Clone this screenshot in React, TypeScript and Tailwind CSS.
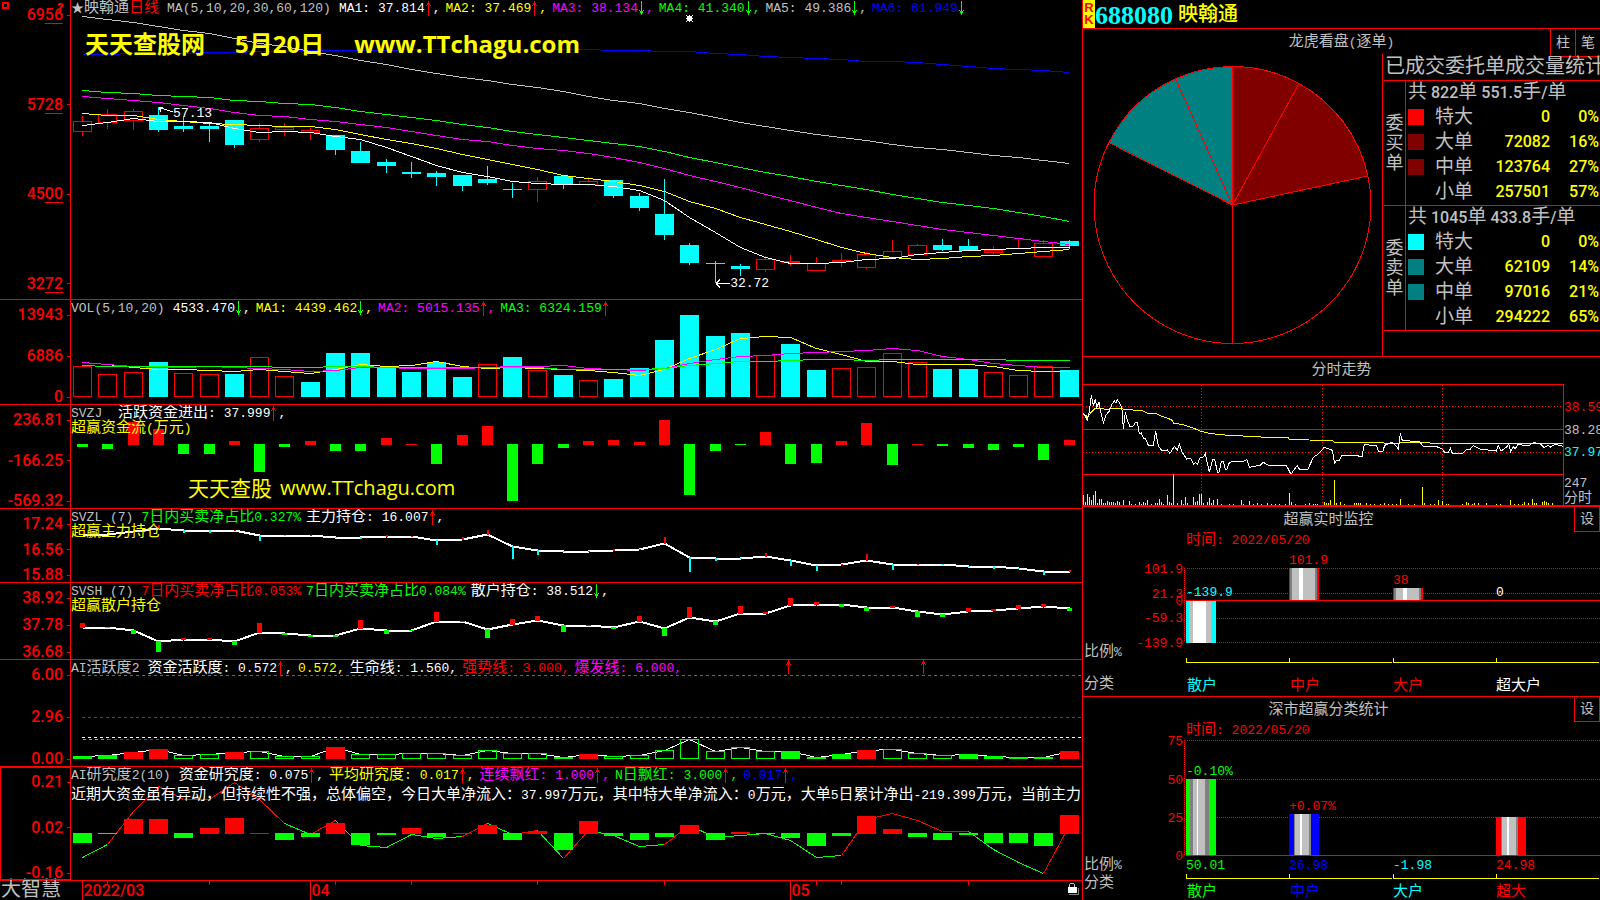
import { Fragment, ReactNode } from 'react';
import clsx from 'clsx';

const RED = '#ff0000';
const CYAN = '#00ffff';
const GREEN = '#00ff00';
const YELLOW = '#ffff00';
const MAGENTA = '#ff00ff';
const GRAY = '#c0c0c0';
const DARK = '#808080';
const BLUE = '#0000ff';
const WHITE = '#ffffff';

const CHART_WIDTH = 1011;

/** Horizontal centre of the n-th trading day. */
const dayX = (i: number) => Math.round(11 + 25.3 * i) + 0.5;

const splitCjk = (text: string) => text.split(/([\u2e80-\u9fff\uff00-\uffef]+)/).filter(Boolean);
const isCjk = (text: string) => /[\u2e80-\u9fff\uff00-\uffef]/.test(text);

function Mixed({ children }: { children: string }) {
  return (
    <>
      {splitCjk(children).map((part, i) =>
        isCjk(part) ? (
          <span key={i} className="text-[15px] leading-[15px]">
            {part}
          </span>
        ) : (
          <Fragment key={i}>{part}</Fragment>
        ),
      )}
    </>
  );
}

interface Reading {
  text: string;
  color: string;
  arrow?: 'up' | 'down';
  comma?: boolean;
}

function Arrow({ dir }: { dir: 'up' | 'down' }) {
  return (
    <svg width="8" height="15" viewBox="0 0 8 15" shapeRendering="crispEdges" className="shrink-0">
      {dir === 'up' ? (
        <path d="M3 0h1v15h-1zM2 2h3v2h-3zM1 4h1v1h-1zM5 4h1v1h-1z" fill={RED} />
      ) : (
        <path d="M3 0h1v14h-1zM2 10h3v2h-3zM1 9h1v1h-1zM5 9h1v1h-1z" fill={GREEN} />
      )}
    </svg>
  );
}

function Readings({ title, items }: { title: ReactNode; items: Reading[] }) {
  return (
    <div className="relative mt-px flex h-[15px] items-center gap-[5px] whitespace-pre">
      <h2 className="mr-[3px] text-[#c0c0c0]">{title}</h2>
      {items.map((item, i) => (
        <span key={i} className={clsx('flex items-center', item.color)}>
          <span>
            <Mixed>{item.text}</Mixed>
          </span>
          {item.arrow && <Arrow dir={item.arrow} />}
          {item.comma !== false && <span>,</span>}
        </span>
      ))}
    </div>
  );
}

interface PanelProps {
  labels: ReactNode[];
  height: number;
  drawing: ReactNode;
  boxed?: boolean;
  padded?: boolean;
  children: ReactNode;
}

function Panel({ labels, height, drawing, boxed, padded, children }: PanelProps) {
  return (
    <section className="flex min-h-0 border-b border-[#ff0000]">
      <div
        className={clsx(
          'relative flex w-[71px] shrink-0 flex-col justify-between border-r border-[#ff0000] pt-2',
          'font-[Roboto,sans-serif] text-base leading-[14px] font-medium text-[#ff0000]',
          boxed && 'outline outline-[#ff0000] -outline-offset-1',
          padded && 'pb-2',
        )}
      >
        {labels.map((label, i) => (
          <div key={i} className="flex h-[14px] items-center justify-end gap-1">
            <span>{label}</span>
            <span className="h-px w-[3px] bg-[#ff0000]" />
          </div>
        ))}
      </div>
      <div className="relative min-w-0 flex-1 overflow-hidden">
        <svg
          className="absolute inset-0 h-full w-full"
          viewBox={`0 0 ${CHART_WIDTH} ${height}`}
          preserveAspectRatio="none"
          shapeRendering="crispEdges"
        >
          {drawing}
        </svg>
        {children}
      </div>
    </section>
  );
}

function DayLine({ ys, color, width = 1 }: { ys: number[]; color: string; width?: number }) {
  const points = ys.map((y, i) => `${dayX(i)},${y + 0.5}`).join(' ');
  return <polyline points={points} fill="none" stroke={color} strokeWidth={width} />;
}

/** Bars growing up (positive) or down (negative) from a base line. */
function SignedBars({
  values,
  base,
  width,
  down = GREEN,
}: {
  values: number[];
  base: number | number[];
  width: number;
  down?: string;
}) {
  return (
    <>
      {values.map((v, i) => {
        const y = typeof base === 'number' ? base : base[i];
        if (v === 0) return null;
        return (
          <rect
            key={i}
            x={Math.floor(dayX(i) - width / 2 + 0.5)}
            y={v > 0 ? y + 1 - v : y}
            width={width}
            height={Math.abs(v)}
            fill={v > 0 ? RED : down}
          />
        );
      })}
    </>
  );
}

// ---- daily candles: high, body top, body bottom, low ----
const candles: [number, number, number, number][] = [
  [116, 121, 131, 136], [109, 114, 122, 129], [109, 111, 120, 130], [107, 115, 130, 132],
  [116, 126, 129, 132], [124, 126, 129, 142], [120, 120, 145, 148], [123, 128, 139, 142],
  [123, 127, 129, 136], [128, 130, 132, 140], [135, 135, 150, 155], [142, 151, 163, 163],
  [159, 162, 166, 173], [162, 172, 174, 178], [171, 173, 177, 186], [175, 175, 186, 191],
  [166, 179, 183, 185], [183, 189, 190, 198], [177, 181, 189, 202], [176, 176, 184, 189],
  [177, 181, 184, 186], [180, 180, 196, 198], [193, 196, 208, 211], [179, 214, 235, 240],
  [243, 245, 263, 265], [261, 263, 264, 283], [264, 266, 269, 276], [256, 259, 269, 272],
  [255, 261, 262, 266], [257, 263, 270, 270], [253, 260, 261, 267], [252, 254, 267, 269],
  [240, 251, 257, 257], [244, 245, 254, 254], [239, 245, 250, 251], [239, 246, 251, 251],
  [246, 250, 252, 254], [240, 246, 246, 248], [240, 243, 256, 256], [240, 241, 246, 249],
];
const risingDays = new Set([0, 1, 2, 7, 8, 9, 18, 20, 27, 28, 29, 30, 31, 32, 33, 36, 37, 38]);

const ma5 = [125, 122, 118, 121, 121, 122, 128, 132, 131, 132, 136, 139, 147, 156, 165, 172, 176, 181, 183, 184, 184, 186, 190, 200, 217, 232, 247, 257, 263, 263, 262, 259, 258, 254, 252, 250, 249, 248, 247, 247];
const ma10 = [113, 115, 115, 119, 121, 123, 124, 125, 126, 126, 129, 134, 139, 143, 148, 154, 159, 164, 169, 175, 178, 181, 185, 191, 201, 208, 217, 224, 231, 239, 247, 253, 257, 259, 258, 256, 255, 253, 251, 249];
const ma20 = [96, 98, 100, 102, 105, 108, 112, 115, 116, 119, 121, 124, 127, 131, 135, 139, 141, 145, 148, 150, 153, 157, 162, 168, 175, 181, 187, 194, 200, 207, 213, 217, 221, 225, 229, 232, 235, 238, 241, 244];
const ma30 = [90, 92, 93, 95, 96, 97, 100, 101, 103, 104, 107, 111, 114, 117, 120, 124, 127, 131, 134, 137, 140, 143, 146, 151, 157, 162, 167, 172, 176, 181, 185, 189, 194, 198, 202, 205, 208, 212, 216, 221];
const ma60 = [16, 19, 22, 26, 30, 33, 38, 43, 46, 51, 55, 60, 64, 69, 73, 77, 80, 84, 87, 91, 96, 100, 103, 108, 112, 117, 122, 126, 130, 134, 137, 140, 144, 147, 149, 152, 155, 157, 160, 163];
const ma120 = [54, 54, 53, 53, 53, 52, 52, 51, 51, 50, 50, 50, 50, 49, 49, 49, 49, 49, 49, 49, 49, 50, 50, 51, 51, 53, 54, 56, 57, 58, 59, 61, 61, 62, 64, 66, 68, 69, 70, 72];

// ---- volume ----
const volumeTops = [66, 74, 72, 62, 73, 74, 74, 57, 76, 82, 53, 53, 68, 72, 62, 77, 64, 57, 70, 75, 80, 79, 68, 40, 15, 36, 33, 55, 44, 70, 68, 67, 53, 62, 69, 69, 72, 75, 66, 70];
const risingVolume = new Set([0, 1, 2, 4, 5, 7, 8, 16, 18, 20, 27, 30, 31, 32, 33, 36, 37, 38]);
const volMa1 = [62, 64, 67, 69, 69, 70, 71, 69, 71, 73, 69, 64, 66, 65, 61, 66, 68, 67, 68, 69, 70, 72, 75, 69, 58, 49, 38, 36, 37, 48, 54, 61, 61, 64, 64, 64, 66, 70, 71, 71];
const volMa2 = [62, 64, 66, 67, 67, 66, 67, 68, 69, 71, 70, 67, 67, 68, 68, 68, 67, 66, 66, 65, 68, 69, 70, 68, 63, 59, 56, 55, 53, 52, 51, 50, 48, 50, 56, 59, 63, 65, 67, 67];
const volMa3 = [65, 66, 66, 66, 66, 66, 66, 66, 67, 67, 66, 66, 67, 67, 67, 67, 67, 67, 67, 69, 69, 69, 69, 68, 65, 63, 61, 61, 60, 59, 59, 60, 59, 59, 59, 59, 59, 60, 60, 60];

const fundFlow = [-3, -5, 23, 16, -10, -10, 4, -28, -3, 4, -7, -7, 7, 1, -20, 10, 19, -57, -20, -4, 4, 5, 3, 25, -51, -7, -1, 13, -20, -19, 4, 22, -21, 1, -2, -4, -6, -3, -16, 5];

const mainHold = [25, 25, 22, 19, 21, 21, 21, 26, 26, 26, 28, 28, 27, 27, 31, 30, 25, 37, 41, 42, 42, 41, 40, 34, 48, 49, 49, 47, 51, 56, 55, 51, 55, 55, 55, 57, 57, 59, 62, 62];
const mainDelta = [0, 0, 3, 4, -3, -3, 1, -6, -1, 1, -1, -2, 2, 1, -5, 3, 5, -13, -5, -1, 1, 2, 1, 7, -15, -3, -1, 4, -6, -6, 1, 7, -6, 1, -1, -1, -3, -1, -4, 2];

const retailHold = [44, 44, 47, 58, 56, 56, 58, 49, 50, 52, 52, 45, 47, 47, 38, 38, 46, 41, 37, 42, 42, 44, 38, 45, 34, 38, 30, 30, 22, 21, 21, 24, 24, 28, 31, 28, 27, 25, 23, 25];
const retailDelta = [5, -1, -4, -11, 2, 2, -4, 10, -2, -2, -2, 9, -4, -1, 10, 1, -9, 6, 5, -7, 1, -2, 6, -8, 11, -4, 8, 2, 8, 3, -3, -4, 2, -6, -3, 4, 2, 4, 3, -3];

const activityTops = [96, 95, 92, 89, 95, 94, 92, 91, 96, 96, 87, 94, 94, 93, 93, 95, 90, 93, 93, 97, 94, 96, 95, 90, 79, 91, 87, 91, 91, 97, 94, 90, 89, 93, 95, 94, 96, 97, 97, 91];
const activityRed = new Set([2, 3, 6, 10, 20, 31, 39]);
const activityGreen = new Set([0, 1, 19, 28, 29, 30, 35, 36, 37, 38]);
const thresholds: [number, number, string][] = [
  [0, 1, GREEN], [1, 18, RED], [18, 19, GREEN], [19, 27, RED],
  [27, 30, GREEN], [30, 34, RED], [34, 38, GREEN], [38, 39, RED],
];

const researchBars = [-10, -1, 15, 15, -5, 6, 16, 1, -7, -4, 11, -12, -2, 6, -4, 1, 9, -7, 3, -17, 13, -3, -7, -4, 9, -7, 2, -1, -5, -13, -3, 18, 5, -4, -7, -2, -10, -10, -13, 19];
const researchLine = [90, 77, 44, 19, 32, 32, 15, 32, 56, 67, 53, 78, 80, 67, 71, 69, 56, 67, 63, 91, 63, 68, 79, 77, 58, 70, 68, 66, 73, 90, 88, 52, 46, 53, 64, 64, 82, 95, 106, 58];
const researchTrend = 'grrrrrrrgrgggggrgrgrgggrggggggrrrrrgggr';

function PriceDrawing() {
  return (
    <>
      {candles.map(([high, top, bottom, low], i) => {
        const x = dayX(i);
        if (!risingDays.has(i)) {
          return (
            <g key={i} fill={CYAN}>
              <rect x={x - 0.5} y={high} width={1} height={low - high} />
              <rect x={x - 9.5} y={top} width={19} height={bottom - top} />
            </g>
          );
        }
        return (
          <g key={i} fill="none" stroke={RED}>
            <path d={`M${x} ${high}V${top}M${x} ${bottom}V${low}`} />
            <rect x={x - 9} y={top + 0.5} width={18} height={bottom - top} />
          </g>
        );
      })}
      <DayLine ys={ma120} color={BLUE} />
      <DayLine ys={ma60} color={GRAY} />
      <DayLine ys={ma30} color={GREEN} />
      <DayLine ys={ma20} color={MAGENTA} />
      <DayLine ys={ma10} color={YELLOW} />
      <DayLine ys={ma5} color={WHITE} />
      <path d="M88 107.5L102 112M88 107.5h4M88 107.5l2 4" stroke={WHITE} fill="none" />
      <path d="M645 283.5h14M645 283.5l4 -4M645 283.5l4 4" stroke={WHITE} fill="none" />
      <path
        d="M616 16h5v5h-5zM615 15h1v1h-1zM618 15h1v1h-1zM621 15h1v1h-1zM615 18h7v1h-7zM615 21h1v1h-1zM618 21h1v1h-1zM621 21h1v1h-1z"
        fill={WHITE}
      />
    </>
  );
}

function VolumeDrawing() {
  return (
    <>
      {volumeTops.map((top, i) =>
        risingVolume.has(i) ? (
          <rect key={i} x={dayX(i) - 9} y={top + 0.5} width={18} height={96 - top} fill="none" stroke={RED} />
        ) : (
          <rect key={i} x={dayX(i) - 9.5} y={top} width={19} height={97 - top} fill={CYAN} />
        ),
      )}
      <DayLine ys={volMa1} color={YELLOW} />
      <DayLine ys={volMa2} color={MAGENTA} />
      <DayLine ys={volMa3} color={GREEN} />
    </>
  );
}

function ActivityDrawing() {
  return (
    <>
      <path d="M11 15.5H1011" stroke={MAGENTA} strokeDasharray="3 3" />
      <path d="M11 57.5H1011" stroke={RED} strokeDasharray="3 3" />
      <path d="M11 77.5H1011" stroke={WHITE} strokeDasharray="3 3" />
      {thresholds.map(([from, to, color]) => (
        <path key={from} d={`M${dayX(from)} 79.5H${dayX(to)}`} stroke={color} strokeDasharray="3 3" />
      ))}
      <DayLine ys={activityTops} color={WHITE} />
      {activityTops.map((top, i) => {
        const red = activityRed.has(i);
        return red || activityGreen.has(i) ? (
          <rect key={i} x={dayX(i) - 9.5} y={top} width={19} height={99 - top} fill={red ? RED : GREEN} />
        ) : (
          <rect key={i} x={dayX(i) - 9} y={top + 0.5} width={18} height={98 - top} fill="none" stroke={GREEN} />
        );
      })}
      {[717, 852].map((x) => (
        <path key={x} d={`M${x} 0h1v14h-1zM${x - 1} 2h3v2h-3zM${x - 2} 4h1v1h-1zM${x + 2} 4h1v1h-1z`} fill={RED} />
      ))}
    </>
  );
}

function ResearchDrawing() {
  return (
    <>
      {researchLine.slice(1).map((y, i) => (
        <path
          key={i}
          d={`M${dayX(i)} ${researchLine[i] + 0.5}L${dayX(i + 1)} ${y + 0.5}`}
          stroke={researchTrend[i] === 'r' ? RED : GREEN}
        />
      ))}
      <SignedBars values={researchBars} base={66} width={19} />
    </>
  );
}

function PriceLabel({ value }: { value: string }) {
  return (
    <>
      {value.slice(0, 2)}
      <span className="underline decoration-1 underline-offset-[3px]">{value.slice(2)}</span>
    </>
  );
}

function Timeline() {
  const months: [number, string][] = [[0, '2022/03'], [9, '04'], [28, '05']];
  return (
    <footer className="flex min-h-0">
      <div className="w-[71px] shrink-0 pl-px text-xl leading-5 whitespace-nowrap text-[#c0c0c0]">大智慧</div>
      <div className="relative flex-1 overflow-hidden">
        <svg
          className="absolute inset-0 h-full w-full"
          viewBox={`0 0 ${CHART_WIDTH} 19`}
          preserveAspectRatio="none"
          shapeRendering="crispEdges"
        >
          {months.map(([day]) => (
            <path key={day} d={`M${dayX(day)} 0V19`} stroke={RED} />
          ))}
          {[1, 5, 10, 13, 18, 23, 29, 30, 35].map((day) => (
            <path key={day} d={`M${dayX(day)} 0V4`} stroke={RED} />
          ))}
          <path d="M999 2.5h4M998.5 3v3M1003.5 3v3" stroke={GRAY} fill="none" />
          <path d="M998 13.5h10M1007.5 7v7" stroke={DARK} fill="none" />
          <path d="M997 6h9v6h-9z" fill={WHITE} />
        </svg>
        {months.map(([day, label]) => (
          <span
            key={label}
            className="absolute top-0 pl-px font-[Roboto,sans-serif] text-base leading-[19px] font-medium text-[#ff0000]"
            style={{ left: `${(dayX(day) / CHART_WIDTH) * 100}%` }}
          >
            {label}
          </span>
        ))}
      </div>
    </footer>
  );
}

// ---- right column ----

const orderGroups = [
  {
    side: '委买单',
    count: '822',
    average: '551.5',
    rows: [
      { name: '特大', swatch: 'bg-[#ff0000]', amount: 0, share: '0%' },
      { name: '大单', swatch: 'bg-[#800000]', amount: 72082, share: '16%' },
      { name: '中单', swatch: 'bg-[#800000]', amount: 123764, share: '27%' },
      { name: '小单', swatch: 'bg-black', amount: 257501, share: '57%' },
    ],
  },
  {
    side: '委卖单',
    count: '1045',
    average: '433.8',
    rows: [
      { name: '特大', swatch: 'bg-[#00ffff]', amount: 0, share: '0%' },
      { name: '大单', swatch: 'bg-[#008080]', amount: 62109, share: '14%' },
      { name: '中单', swatch: 'bg-[#008080]', amount: 97016, share: '21%' },
      { name: '小单', swatch: 'bg-black', amount: 294222, share: '65%' },
    ],
  },
];

const slices: [number, number, string][] = [
  [0, 28.7, '#800000'],
  [28.7, 77.9, '#800000'],
  [77.9, 180, 'none'],
  [180, 296.8, 'none'],
  [296.8, 335.7, '#008080'],
  [335.7, 360, '#008080'],
];

function OrderPie() {
  const cx = 149.5;
  const cy = 151;
  const r = 138.5;
  const at = (deg: number) => {
    const a = (deg * Math.PI) / 180;
    return `${(cx + r * Math.sin(a)).toFixed(1)} ${(cy - r * Math.cos(a)).toFixed(1)}`;
  };
  return (
    <svg viewBox="0 0 299 302" className="h-full w-full" shapeRendering="crispEdges">
      {slices.map(([from, to, fill]) => (
        <path
          key={from}
          d={`M${cx} ${cy}L${at(from)}A${r} ${r} 0 0 1 ${at(to)}Z`}
          fill={fill}
          stroke={RED}
        />
      ))}
    </svg>
  );
}

function OrderTable({ group }: { group: (typeof orderGroups)[number] }) {
  return (
    <div className="flex h-[125px] border-t border-[#ff0000]">
      <div className="flex w-[21px] shrink-0 flex-col items-center justify-center pt-px text-lg leading-5 text-[#c0c0c0]">
        {[...group.side].map((ch) => (
          <span key={ch}>{ch}</span>
        ))}
      </div>
      <div className="min-w-0 flex-1 border-l border-[#ff0000]">
        <table className="w-full table-fixed font-[Roboto,'Noto_Sans_CJK_SC',sans-serif] text-base font-medium text-[#ffff00]">
          <caption className="h-[23px] pl-[2px] text-left leading-[22px] whitespace-nowrap text-[#c0c0c0]">
            <span className="text-[19px] leading-[22px] font-normal">共</span> {group.count}
            <span className="text-[19px] leading-[22px] font-normal">单</span> {group.average}
            <span className="text-[19px] leading-[22px] font-normal">手</span>/
            <span className="text-[19px] leading-[22px] font-normal">单</span>
          </caption>
          <tbody>
            {group.rows.map((row) => (
              <tr key={row.name} className="h-[25px] leading-6">
                <td className="w-[29px] p-0 pl-[2px]">
                  <div className={clsx('size-4', row.swatch)} />
                </td>
                <th className="w-11 p-0 text-left text-[19px] leading-6 font-normal text-[#c0c0c0]">{row.name}</th>
                <td className="w-[71px] p-0 text-right">{row.amount}</td>
                <td className="p-0 pr-px text-right">{row.share}</td>
              </tr>
            ))}
          </tbody>
        </table>
      </div>
    </div>
  );
}

const intradayPrice =
  '9,190 15,197 22,210 27,190 34,136 40,168 46,146 50,172 57,157 63,190 70,218 78,195 88,183 96,163 103,152 108,160 112,149 122,165 127,185 130,238 136,186 142,210 150,230 160,228 166,217 172,217 178,252 184,248 190,265 196,265 205,286 220,286 227,244 235,288 245,301 262,300 270,310 283,289 292,300 298,281 306,306 320,327 332,325 341,343 346,337 352,343 360,323 370,321 376,311 382,340 388,366 398,329 404,329 413,368 418,366 424,334 430,334 436,358 441,357 448,338 460,334 490,335 500,328 508,352 540,346 550,337 565,346 620,348 633,373 645,355 652,347 658,357 684,357 700,322 715,312 733,292 757,301 764,340 770,331 778,331 785,318 830,317 846,320 853,284 890,287 896,305 908,306 914,286 935,277 950,289 955,297 961,250 967,272 985,272 1000,276 1018,274 1030,289 1070,290 1088,298 1094,307 1106,306 1111,295 1117,310 1148,310 1160,298 1170,298 1180,287 1200,297 1249,303 1255,287 1264,303 1280,291 1286,282 1292,304 1300,290 1306,296 1314,283 1345,288 1360,278 1380,281 1392,293 1405,286 1412,291 1425,283 1450,289';
const intradayAverage =
  '9,190 22,200 45,175 85,178 95,175 130,177 190,183 203,190 228,190 245,199 262,204 275,210 281,220 310,224 340,234 360,243 385,249 412,253 448,256 507,259 562,262 624,263 628,268 687,270 757,271 763,277 910,277 914,280 955,280 962,277 1048,277 1052,280 1450,280';
const intradayVolume: [number, number][] = [
  [10, 435], [16, 456], [22, 432], [28, 441], [34, 450], [40, 435], [46, 423], [52, 460], [58, 447], [64, 447],
  [70, 459], [76, 460], [82, 453], [88, 456], [94, 456], [100, 456], [106, 459], [112, 453], [118, 456], [130, 450],
  [148, 453], [154, 462], [166, 462], [178, 456], [184, 461], [190, 456], [196, 459], [202, 450], [214, 462], [226, 459],
  [232, 459], [238, 447], [244, 456], [250, 462], [262, 435], [268, 456], [274, 459], [280, 373], [292, 459], [304, 450],
  [310, 462], [316, 441], [322, 459], [340, 441], [346, 456], [352, 453], [358, 432], [364, 432], [370, 459], [382, 456],
  [388, 444], [394, 459], [400, 450], [412, 447], [424, 462], [448, 462], [460, 462], [484, 450], [490, 462], [508, 453],
  [520, 462], [532, 459], [544, 462], [562, 459], [574, 462], [586, 462], [598, 462], [616, 462], [628, 429], [634, 456],
  [646, 462], [676, 462], [688, 459], [700, 462], [706, 462], [712, 462], [733, 456], [739, 459], [745, 459], [751, 450],
  [763, 390], [769, 459], [781, 456], [793, 462], [823, 460], [829, 459], [835, 459], [841, 459], [859, 459], [871, 462],
  [883, 462], [901, 462], [913, 459], [925, 462], [937, 462], [949, 462], [961, 447], [985, 462], [1003, 462], [1027, 411],
  [1033, 459], [1051, 462], [1063, 462], [1075, 450], [1087, 453], [1099, 462], [1105, 462], [1147, 462], [1159, 456],
  [1165, 459], [1177, 462], [1183, 459], [1195, 459], [1219, 459], [1249, 462], [1261, 462], [1291, 450], [1303, 462],
  [1315, 462], [1327, 462], [1333, 456], [1345, 459], [1357, 447], [1363, 459], [1369, 459], [1387, 456], [1393, 453],
  [1399, 456], [1405, 460], [1417, 460], [1450, 444],
];

function IntradayChart() {
  return (
    <svg
      viewBox="9 105 1440 360"
      preserveAspectRatio="none"
      className="min-h-0 min-w-0 flex-1 border-r border-[#ff0000]"
      shapeRendering="crispEdges"
      fill="none"
      strokeWidth="3"
    >
      <g stroke={RED}>
        <path d="M9 169.5H1450M9 307.5H1450M364.5 105V465M727.5 105V465M1087.5 105V465" strokeDasharray="3 6" />
        <path d="M9 238.5H1450M9 373.5H1450" />
      </g>
      <path d={intradayVolume.map(([x, top]) => `M${x + 0.5} 465V${top}`).join('')} stroke={YELLOW} />
      <polyline points={intradayAverage} stroke={YELLOW} />
      <polyline points={intradayPrice} stroke={WHITE} />
    </svg>
  );
}

interface LabelProps {
  x: number;
  y: number;
  color: string;
  end?: boolean;
  children: string;
}

function Label({ x, y, color, end, children }: LabelProps) {
  return (
    <text
      x={x}
      y={isCjk(children) ? y + 5 : y + 4}
      fill={color}
      fontSize={13}
      textAnchor={end ? 'end' : 'start'}
    >
      {splitCjk(children).map((part, i) => (
        <tspan key={i} fontSize={isCjk(part) ? 15 : 13}>
          {part}
        </tspan>
      ))}
    </text>
  );
}

/** A striped cylinder: every stop is [width, colour] from left to right. */
function Cylinder({ x, y, height, stops }: { x: number; y: number; height: number; stops: [number, string][] }) {
  let left = x;
  return (
    <>
      {stops.map(([width, color], i) => {
        const rect = <rect key={i} x={left} y={y} width={width} height={height} fill={color} />;
        left += width;
        return rect;
      })}
    </>
  );
}

function CategoryAxis({ y }: { y: number }) {
  return (
    <path
      d={`M103.5 ${y - 4}V${y + 0.5}H309M206.5 ${y - 4}V${y}M310.5 ${y - 4}V${y + 0.5}H516M413.5 ${y - 4}V${y}`}
      stroke={YELLOW}
      fill="none"
    />
  );
}

function MonitorChart() {
  return (
    <svg viewBox="0 0 517 164" className="min-h-0 w-full flex-1" shapeRendering="crispEdges">
      <path d="M101.5 36V110M104 36.5H517M104 61.5H517M104 86.5H517M104 110.5H517" stroke={RED} strokeDasharray="1 1" />
      <path d="M103 68.5H517" stroke={RED} />
      <Cylinder x={103} y={69} height={42} stops={[[3, CYAN], [4, GRAY], [13, WHITE], [5, GRAY], [5, CYAN]]} />
      <Cylinder x={206} y={36} height={32} stops={[[1, RED], [2, DARK], [7, GRAY], [4, WHITE], [12, GRAY], [2, DARK], [2, RED]]} />
      <Cylinder x={310} y={56} height={12} stops={[[1, RED], [2, DARK], [7, GRAY], [4, WHITE], [12, GRAY], [2, DARK], [2, RED]]} />
      <CategoryAxis y={130} />
      <Label x={103} y={7} color={RED}>时间: 2022/05/20</Label>
      <Label x={100} y={37} color={RED} end>101.9</Label>
      <Label x={100} y={62} color={RED} end>21.3</Label>
      <Label x={100} y={69} color={RED} end>0</Label>
      <Label x={100} y={86} color={RED} end>-59.3</Label>
      <Label x={100} y={111} color={RED} end>-139.9</Label>
      <Label x={103} y={60} color={CYAN}>-139.9</Label>
      <Label x={206} y={28} color={RED}>101.9</Label>
      <Label x={310} y={48} color={RED}>38</Label>
      <Label x={413} y={60} color={WHITE}>0</Label>
      <Label x={1} y={119} color={GRAY}>比例%</Label>
      <Label x={1} y={151} color={GRAY}>分类</Label>
      <Label x={104} y={153} color={CYAN}>散户</Label>
      <Label x={207} y={153} color={RED}>中户</Label>
      <Label x={310} y={153} color={RED}>大户</Label>
      <Label x={413} y={153} color={WHITE}>超大户</Label>
    </svg>
  );
}

function ShareChart() {
  return (
    <svg viewBox="0 0 517 178" className="min-h-0 w-full flex-1" shapeRendering="crispEdges">
      <path d="M101.5 18V133M104 18.5H517M104 57.5H517M104 95.5H517" stroke={RED} strokeDasharray="1 1" />
      <path d="M103 133.5H517" stroke={RED} />
      <Cylinder x={103} y={57} height={76} stops={[[4, GREEN], [3, DARK], [4, GRAY], [1, WHITE], [7, GRAY], [4, DARK], [7, GREEN]]} />
      <Cylinder x={206} y={92} height={41} stops={[[5, BLUE], [1, DARK], [5, GRAY], [2, WHITE], [7, GRAY], [2, DARK], [8, BLUE]]} />
      <Cylinder x={413} y={95} height={38} stops={[[5, RED], [1, DARK], [5, GRAY], [2, WHITE], [7, GRAY], [2, DARK], [8, RED]]} />
      <CategoryAxis y={156} />
      <Label x={103} y={7} color={RED}>时间: 2022/05/20</Label>
      <Label x={100} y={19} color={RED} end>75</Label>
      <Label x={100} y={58} color={RED} end>50</Label>
      <Label x={100} y={96} color={RED} end>25</Label>
      <Label x={100} y={134} color={RED} end>0</Label>
      <Label x={103} y={49} color={GREEN}>-0.10%</Label>
      <Label x={206} y={84} color={RED}>+0.07%</Label>
      <Label x={103} y={143} color={GREEN}>50.01</Label>
      <Label x={206} y={143} color={BLUE}>26.98</Label>
      <Label x={310} y={143} color={CYAN}>-1.98</Label>
      <Label x={413} y={143} color={RED}>24.98</Label>
      <Label x={1} y={142} color={GRAY}>比例%</Label>
      <Label x={1} y={160} color={GRAY}>分类</Label>
      <Label x={104} y={169} color={GREEN}>散户</Label>
      <Label x={207} y={169} color={BLUE}>中户</Label>
      <Label x={310} y={169} color={CYAN}>大户</Label>
      <Label x={413} y={169} color={RED}>超大</Label>
    </svg>
  );
}

function SectionTitle({ title }: { title: string }) {
  return (
    <div className="flex h-[25px] shrink-0">
      <h2 className="flex-1 text-center text-[15px] leading-7 text-[#c0c0c0]">{title}</h2>
      <button type="button" className="w-[26px] border-x border-b border-[#ff0000] text-sm leading-none text-[#c0c0c0]">
        设
      </button>
    </div>
  );
}

export default function App() {
  return (
    <main className="flex h-screen overflow-hidden bg-black font-['Liberation_Mono','Noto_Sans_CJK_SC',monospace] text-[13px] leading-[15px] text-white">
      <div className="grid min-w-0 flex-1 grid-rows-[300fr_105fr_104fr_74fr_77fr_107fr_114fr_19fr]">
        <Panel
          height={299}
          padded
          drawing={<PriceDrawing />}
          labels={['6956', '5728', '4500', '3272'].map((v) => (
            <PriceLabel key={v} value={v} />
          ))}
        >
          <Readings
            title={
              <>
                ★<span className="text-[15px]">映翰通</span>
                <span className="mr-2 text-[15px] text-[#ff0000]">日线</span>
                MA(5,10,20,30,60,120)
              </>
            }
            items={[
              { text: 'MA1: 37.814', color: 'text-white', arrow: 'up' },
              { text: 'MA2: 37.469', color: 'text-[#ffff00]', arrow: 'up' },
              { text: 'MA3: 38.134', color: 'text-[#ff00ff]', arrow: 'down' },
              { text: 'MA4: 41.340', color: 'text-[#00ff00]', arrow: 'down' },
              { text: 'MA5: 49.386', color: 'text-[#c0c0c0]', arrow: 'down' },
              { text: 'MA6: 61.949', color: 'text-[#0000ff]', arrow: 'down', comma: false },
            ]}
          />
          <p className="relative mt-[10px] ml-[14px] flex items-center gap-[30px] font-['Open_Sans','Noto_Sans_CJK_SC',sans-serif] text-2xl leading-9 font-bold whitespace-nowrap text-[#ffff00]">
            <span>天天查股网</span>
            <span>5月20日</span>
            <span>www.TTchagu.com</span>
          </p>
          <span className="absolute top-[35%] left-[10%] pt-px pl-px">57.13</span>
          <span className="absolute top-[92%] left-[65%] pt-px pl-[2px]">32.72</span>
        </Panel>

        <Panel height={104} drawing={<VolumeDrawing />} labels={['13943', '6886', '0']}>
          <Readings
            title="VOL(5,10,20)"
            items={[
              { text: '4533.470', color: 'text-white', arrow: 'down' },
              { text: 'MA1: 4439.462', color: 'text-[#ffff00]', arrow: 'down' },
              { text: 'MA2: 5015.135', color: 'text-[#ff00ff]', arrow: 'up' },
              { text: 'MA3: 6324.159', color: 'text-[#00ff00]', arrow: 'up', comma: false },
            ]}
          />
        </Panel>

        <Panel
          height={103}
          drawing={<SignedBars values={fundFlow} base={39} width={11} />}
          labels={['236.81', '-166.25', '-569.32']}
        >
          <Readings title="SVZJ " items={[{ text: '活跃资金进出: 37.999', color: 'text-white', arrow: 'up' }]} />
          <p className="relative text-[#ffff00]">
            <Mixed>超赢资金流(万元)</Mixed>
          </p>
          <p className="relative mt-10 ml-[117px] flex items-center gap-2 font-['Open_Sans','Noto_Sans_CJK_SC',sans-serif] text-[21px] leading-6 text-[#ffff00]">
            <span>天天查股</span>
            <span className="text-xl leading-6">www.TTchagu.com</span>
          </p>
        </Panel>

        <Panel
          height={73}
          drawing={
            <>
              <DayLine ys={mainHold} color={WHITE} width={2} />
              <SignedBars values={mainDelta} base={mainHold} width={2} down={CYAN} />
            </>
          }
          labels={['17.24', '16.56', '15.88']}
        >
          <Readings
            title="SVZL (7)"
            items={[
              { text: '7日内买卖净占比0.327%', color: 'text-[#00ff00]', comma: false },
              { text: '主力持仓: 16.007', color: 'text-white', arrow: 'up' },
            ]}
          />
          <p className="relative text-[15px] text-[#ffff00]">超赢主力持仓</p>
        </Panel>

        <Panel
          height={76}
          drawing={
            <>
              <DayLine ys={retailHold} color={WHITE} width={2} />
              <SignedBars values={retailDelta} base={retailHold} width={5} />
            </>
          }
          labels={['38.92', '37.78', '36.68']}
        >
          <Readings
            title="SVSH (7)"
            items={[
              { text: '7日内买卖净占比0.053%', color: 'text-[#ff0000]', comma: false },
              { text: '7日内买卖净占比0.084%', color: 'text-[#00ff00]', comma: false },
              { text: '散户持仓: 38.512', color: 'text-white', arrow: 'down' },
            ]}
          />
          <p className="relative text-[15px] text-[#ffff00]">超赢散户持仓</p>
        </Panel>

        <Panel height={106} drawing={<ActivityDrawing />} labels={['6.00', '2.96', '0.00']}>
          <Readings
            title={<Mixed>AI活跃度2</Mixed>}
            items={[
              { text: '资金活跃度: 0.572', color: 'text-white', arrow: 'up' },
              { text: '0.572', color: 'text-[#ffff00]' },
              { text: '生命线: 1.560', color: 'text-white' },
              { text: '强势线: 3.000', color: 'text-[#ff0000]' },
              { text: '爆发线: 6.000', color: 'text-[#ff00ff]' },
            ]}
          />
        </Panel>

        <Panel height={113} drawing={<ResearchDrawing />} labels={['0.21', '0.02', '-0.16']} boxed>
          <Readings
            title={<Mixed>AI研究度2(10)</Mixed>}
            items={[
              { text: '资金研究度: 0.075', color: 'text-white', arrow: 'up' },
              { text: '平均研究度: 0.017', color: 'text-[#ffff00]', arrow: 'up' },
              { text: '连续飘红: 1.000', color: 'text-[#ff00ff]', arrow: 'up' },
              { text: 'N日飘红: 3.000', color: 'text-[#00ff00]', arrow: 'up' },
              { text: '0.017', color: 'text-[#0000ff]', arrow: 'up' },
            ]}
          />
          <p className="relative mt-[5px] leading-4 whitespace-nowrap">
            <Mixed>
              近期大资金虽有异动，但持续性不强，总体偏空，今日大单净流入：37.997万元，其中特大单净流入：0万元，大单5日累计净出-219.399万元，当前主力
            </Mixed>
          </p>
        </Panel>

        <Timeline />

        <div className="absolute top-[2px] left-[2px] size-[7px] border-2 border-[#ff0000]" />
        <span className="absolute top-[2px] left-[57px] font-[Roboto,sans-serif] text-[13px] leading-3 font-black text-[#ff0000]">
          ?
        </span>
      </div>

      <aside className="grid w-[518px] shrink-0 grid-rows-[29fr_328fr_150fr_190fr_203fr] border-l border-[#ff0000]">
        <header className="flex min-h-0 items-center border-b border-[#ff0000]">
          <div className="flex h-full w-3 flex-col items-center justify-center bg-[#ffff00] font-['Liberation_Sans',sans-serif] text-[13px] leading-3 font-bold text-[#ff0000]">
            <span>R</span>
            <span>K</span>
          </div>
          <h1 className="flex gap-[5px] pt-1 leading-7">
            <span className="font-['Liberation_Serif',serif] text-[26px] font-bold text-[#00ffff]">688080</span>
            <span className="text-xl leading-7 font-medium text-[#ffff00]">映翰通</span>
          </h1>
        </header>

        <section className="flex min-h-0 flex-col border-b border-[#ff0000]">
          <div className="grid h-[25px] shrink-0 grid-cols-[1fr_auto_1fr] text-[#c0c0c0]">
            <h2 className="col-start-2 leading-7">
              <Mixed>龙虎看盘(逐单)</Mixed>
            </h2>
            <div className="flex justify-end text-sm">
              <button type="button" className="w-[25px] border-b border-l border-[#ff0000] leading-none">
                柱
              </button>
              <button type="button" className="w-[25px] border-b border-l border-[#ff0000] leading-none">
                笔
              </button>
            </div>
          </div>
          <div className="flex min-h-0 flex-1">
            <div className="min-w-0 flex-1">
              <OrderPie />
            </div>
            <div className="w-[218px] overflow-hidden border-l border-[#ff0000] pl-px">
              <h3 className="h-[26px] pl-px text-xl leading-7 whitespace-nowrap text-[#c0c0c0]">
                已成交委托单成交量统计
              </h3>
              {orderGroups.map((group) => (
                <OrderTable key={group.side} group={group} />
              ))}
              <div className="h-px bg-[#ff0000]" />
            </div>
          </div>
        </section>

        <section className="flex min-h-0 flex-col border-b-2 border-[#ff0000]">
          <h2 className="h-[27px] shrink-0 text-center text-[15px] leading-7 text-[#c0c0c0]">分时走势</h2>
          <div className="flex min-h-0 flex-1">
            <div className="flex min-w-0 flex-1 border-t border-[#ff0000]">
              <IntradayChart />
            </div>
            <div className="flex w-9 shrink-0 flex-col overflow-hidden pt-4 text-[#c0c0c0]">
              <span className="h-[23px] text-[#ff0000]">38.59</span>
              <span className="h-[23px]">38.28</span>
              <span className="h-[31px] text-[#00ffff]">37.97</span>
              <span>247</span>
              <span className="text-sm leading-[14px]">分时</span>
            </div>
          </div>
        </section>

        <section className="flex min-h-0 flex-col border-b border-[#ff0000]">
          <SectionTitle title="超赢实时监控" />
          <MonitorChart />
        </section>

        <section className="flex min-h-0 flex-col">
          <SectionTitle title="深市超赢分类统计" />
          <ShareChart />
        </section>
      </aside>
    </main>
  );
}
